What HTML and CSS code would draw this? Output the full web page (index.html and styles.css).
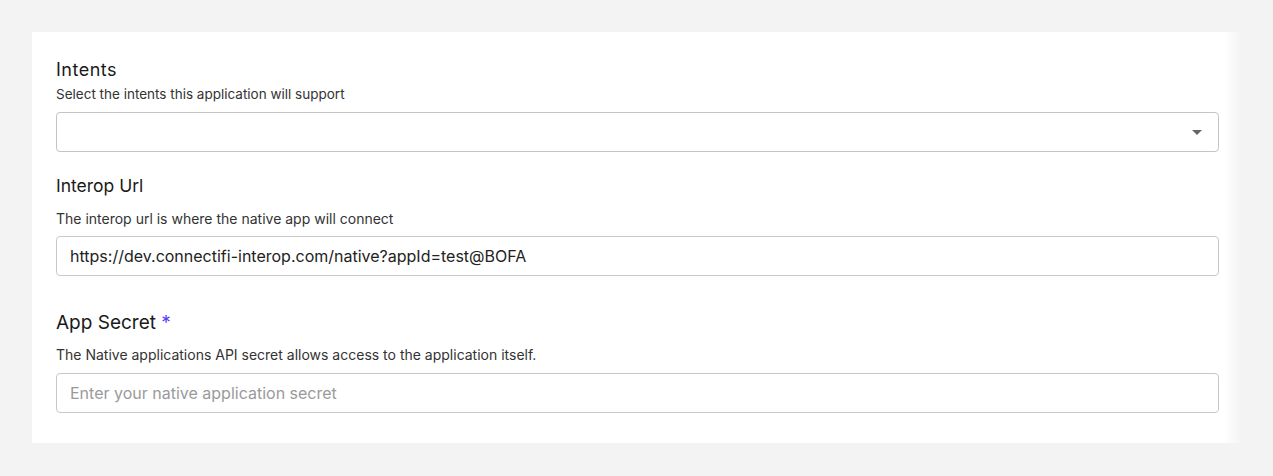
FILE: index.html
```html
<!DOCTYPE html>
<html lang="en">
<head>
<meta charset="utf-8">
<title>Native App Settings</title>
<link rel="stylesheet" href="styles.css">
</head>
<body>
<main class="page">
  <section class="card">
    <div class="field field-intents">
      <h3 class="label label-intents">Intents</h3>
      <p class="hint hint-tight">Select the intents this application will support</p>
      <div class="select">
        <span class="select-value"></span>
        <svg class="caret" width="10" height="5" viewBox="0 0 10 5"><path d="M0 0h10L5 5z" fill="#666"/></svg>
      </div>
    </div>
    <div class="field field-url">
      <h3 class="label label-url">Interop Url</h3>
      <p class="hint">The interop url is where the native app will connect</p>
      <input class="input" type="text" value="https://dev.connectifi-interop.com/native?appId=test@BOFA">
    </div>
    <div class="field field-secret">
      <h3 class="label label-secret">App Secret <span class="req">*</span></h3>
      <p class="hint">The Native applications API secret allows access to the application itself.</p>
      <input class="input" type="text" placeholder="Enter your native application secret">
    </div>
  </section>
</main>
</body>
</html>
```

FILE: styles.css
```css
* { box-sizing: border-box; }
html, body { margin: 0; padding: 0; }
body {
  background: #f3f3f3;
  font-family: Inter, "Noto Sans", "Liberation Sans", sans-serif;
  color: #1a1a1a;
}
.page {
  padding: 32px 33px 33px 32px;
}
.card {
  width: 1208px;
  background: linear-gradient(to right, #ffffff calc(100% - 16px), #f5f5f5 100%);
  padding: 26px 21px 30px 24px;
  display: flex;
  flex-direction: column;
}
.field { display: flex; flex-direction: column; }
.label {
  margin: 0;
  font-size: 18px;
  line-height: 24px;
  font-weight: 400;
  color: #1a1a1a;
}
.label-intents { letter-spacing: 0.5px; }
.label-url { font-size: 17.5px; }
.label-secret { font-size: 19px; }
.req { color: #5a3df0; }
.hint {
  margin: 12px 0 8px;
  font-size: 14px;
  line-height: 18px;
  color: #333;
}
.hint-tight { margin: 3px 0 9px; font-size: 13.5px; }
.field-url { margin-top: 22px; }
.field-secret { margin-top: 35px; }
.field-secret .hint { margin: 11px 0 9px; }
.select {
  height: 40px;
  border: 1px solid #c4c4c4;
  border-radius: 4px;
  display: flex;
  align-items: center;
  justify-content: space-between;
  padding: 0 16px 0 13px;
  background: #fff;
}
.caret { display: block; }
.input {
  height: 40px;
  border: 1px solid #c8c8c8;
  border-radius: 4px;
  padding: 0 13px;
  font-family: Inter, "Noto Sans", "Liberation Sans", sans-serif;
  font-size: 16px;
  color: #222;
  background: #fff;
  outline: none;
  width: 100%;
}
.input::placeholder { color: #9a9a9a; }
```
